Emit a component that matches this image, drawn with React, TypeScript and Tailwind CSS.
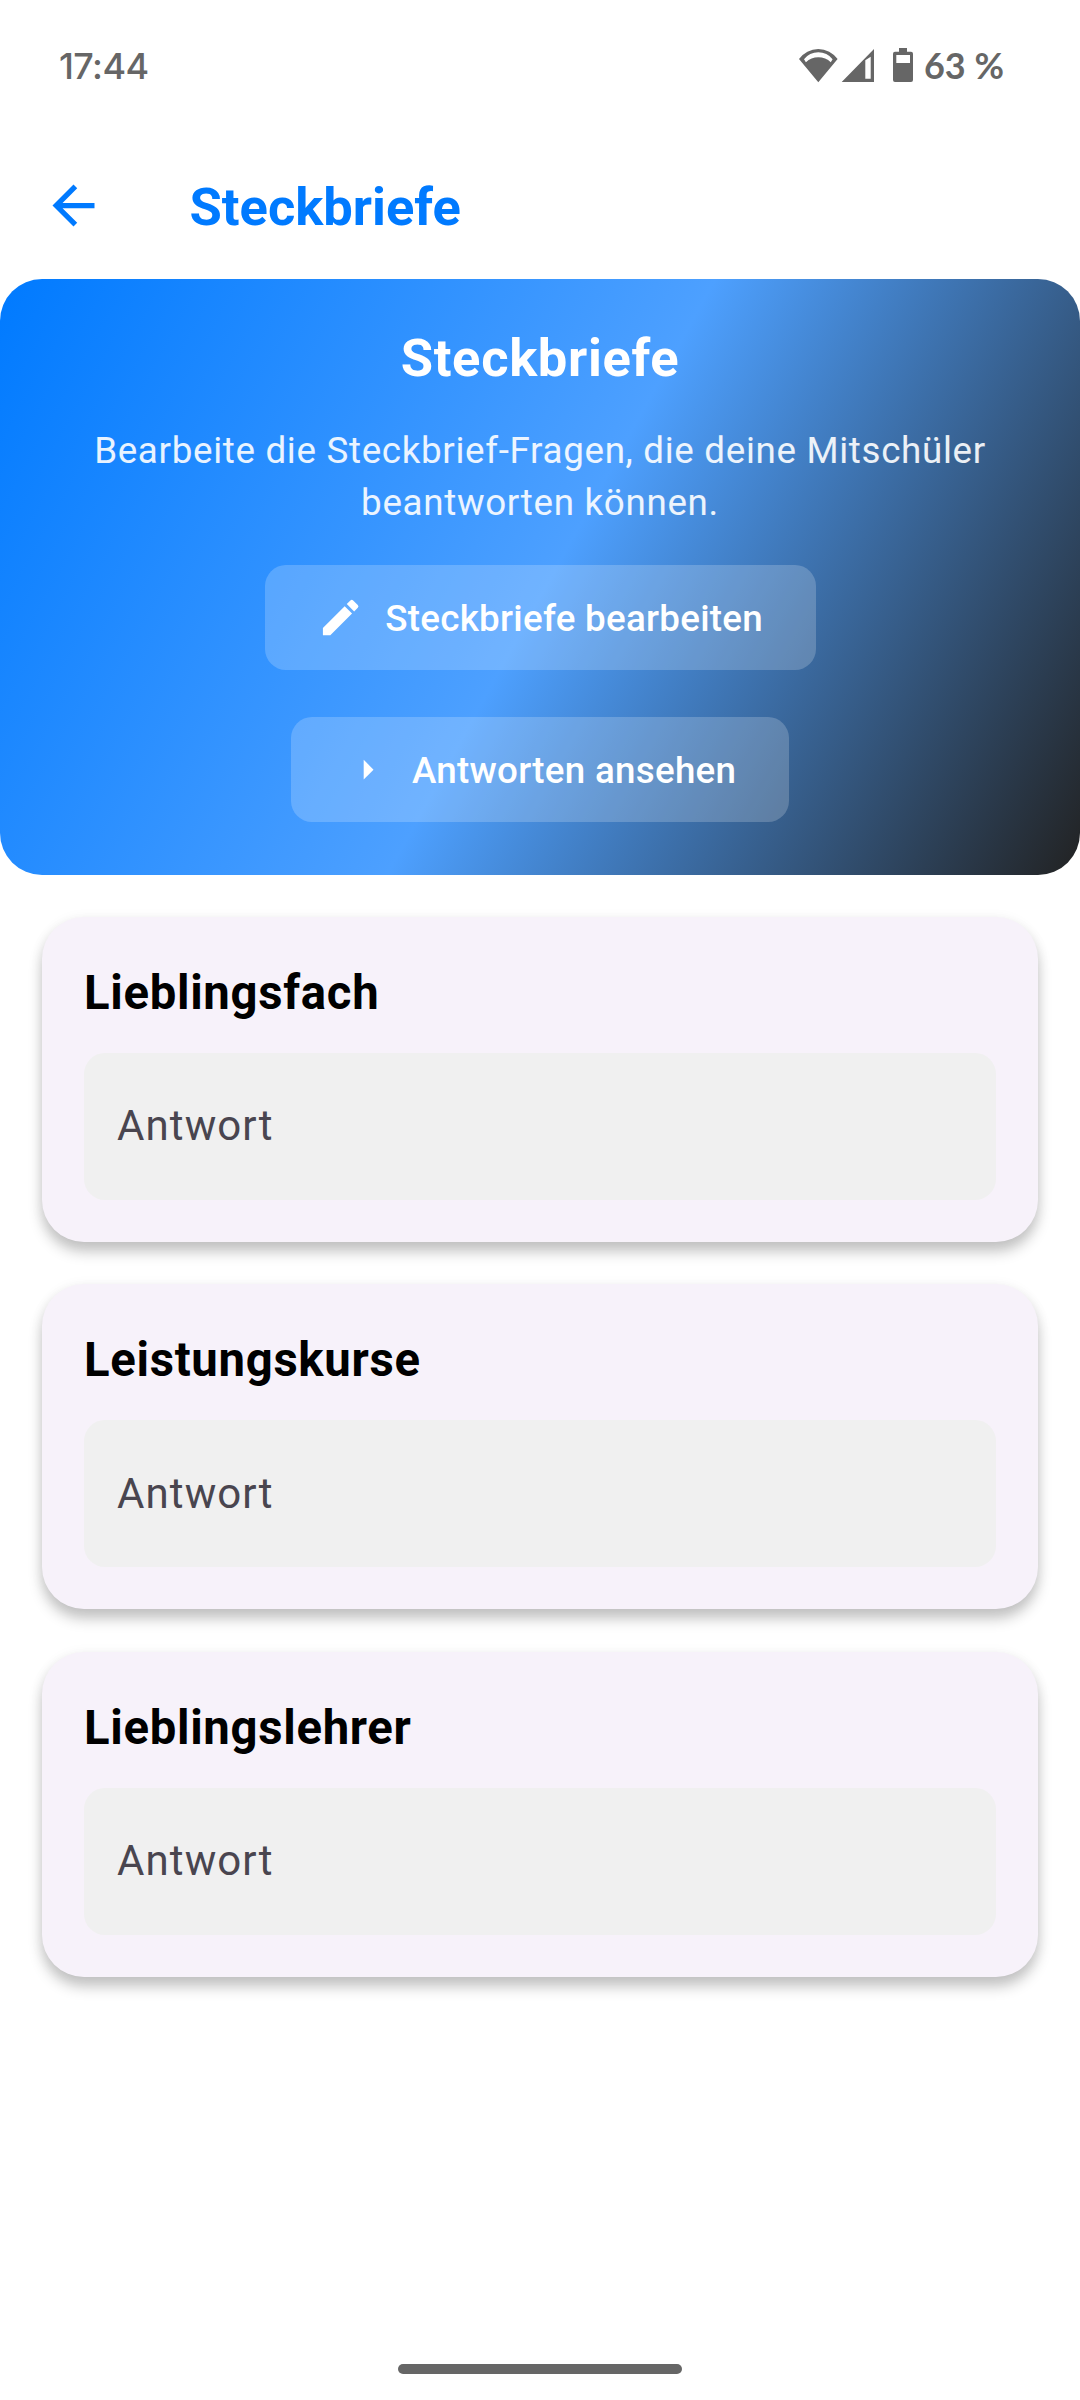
import React from "react";

const questions = ["Lieblingsfach", "Leistungskurse", "Lieblingslehrer"];

function StatusBar() {
  return (
    <div className="flex h-[132px] items-center justify-between pl-[59px] pr-[76px] text-[36px] leading-none text-[#666666]">
      <span className="font-['Inter',sans-serif] font-medium tracking-[-0.6px]">
        17:44
      </span>
      <div className="flex items-center">
        <svg className="h-9 w-10" viewBox="0 0 40 36" fill="currentColor">
          <path
            fillRule="evenodd"
            d="M1 11A23.6 23.6 0 0 1 39.6 11L20.3 34.3ZM6 11.3L7.9 14.3A17.8 17.8 0 0 1 32.8 14.3L34.6 11.3A18 18 0 0 0 6 11.3Z"
          />
        </svg>
        <svg className="ml-[3px] h-9 w-[33px]" viewBox="0 0 33 36" fill="currentColor">
          <path
            fillRule="evenodd"
            d="M.7 34L33 1V34ZM24.3 12.3V30.7H29.7V8.7Z"
          />
        </svg>
        <svg className="ml-[19px] h-9 w-5" viewBox="0 0 20 36" fill="currentColor">
          <path
            fillRule="evenodd"
            d="M6 0H14V3.7H18A2 2 0 0 1 20 5.7V32A2 2 0 0 1 18 34H2A2 2 0 0 1 0 32V5.7A2 2 0 0 1 2 3.7H6ZM3.3 7V15H17V7Z"
          />
        </svg>
        <span className="ml-[11px] pb-[3px] font-['Lato',sans-serif] font-bold">
          63 %
        </span>
      </div>
    </div>
  );
}

function Header() {
  return (
    <header className="flex h-[147px] items-center pl-[42px] text-[#007aff]">
      <svg className="h-[63px] w-[63px]" viewBox="0 0 24 24" fill="currentColor">
        <path d="M20 11H7.83l5.59-5.59L12 4l-8 8 8 8 1.41-1.41L7.83 13H20v-2z" />
      </svg>
      <h1 className="ml-[84.5px] pt-[3px] text-[52.5px] leading-none font-bold">
        Steckbriefe
      </h1>
    </header>
  );
}

function HeroButton({ icon, label }: { icon: string; label: string }) {
  return (
    <button className="flex h-[105px] items-center gap-[21px] rounded-[21px] bg-white/20 px-[52.5px] text-[36.75px] leading-none font-medium tracking-[0.27px]">
      <svg className="h-[47.25px] w-[47.25px]" viewBox="0 0 24 24" fill="currentColor">
        <path d={icon} />
      </svg>
      <span className="pt-[3px]">{label}</span>
    </button>
  );
}

function Hero() {
  return (
    <section className="flex h-[595.7px] flex-col items-center rounded-[42px] bg-[linear-gradient(118.85deg,#007aff_0%,#4da0ff_50.8%,#222222_100%)] pt-[52.5px] text-white">
      <h2 className="text-[52.5px] leading-none font-bold tracking-[0.65px]">
        Steckbriefe
      </h2>
      <p className="mt-[41px] w-[960px] text-center text-[36.75px] leading-[52px] tracking-[0.68px] text-white/90">
        Bearbeite die Steckbrief-Fragen, die deine Mitschüler beantworten
        können.
      </p>
      <div className="mt-[36px] flex flex-col items-center gap-[47px]">
        <HeroButton
          icon="M3 17.25V21h3.75L17.81 9.94l-3.75-3.75L3 17.25zM20.71 7.04a.996.996 0 0 0 0-1.41l-2.34-2.34a.996.996 0 0 0-1.41 0l-1.83 1.83 3.75 3.75 1.83-1.83z"
          label="Steckbriefe bearbeiten"
        />
        <HeroButton icon="M10 17l5-5-5-5v10z" label="Antworten ansehen" />
      </div>
    </section>
  );
}

function QuestionCard({ title }: { title: string }) {
  return (
    <div className="rounded-[42px] bg-[#f7f2fa] p-[42px] shadow-[0_10px_14px_rgba(0,0,0,0.22),0_2px_14px_rgba(0,0,0,0.06)]">
      <h3 className="text-[47.25px] leading-[69px] font-bold tracking-[0.7px] text-black">
        {title}
      </h3>
      <div className="mt-[25px] flex h-[147px] items-center rounded-[21px] bg-[#f0f0f0] px-[33px] pb-[1px] text-[42px] tracking-[1.1px] text-[#49454f]">
        Antwort
      </div>
    </div>
  );
}

export default function App() {
  return (
    <div className="flex h-[2400px] w-[1080px] flex-col bg-white font-['Roboto',sans-serif]">
      <StatusBar />
      <Header />
      <Hero />
      <main className="flex flex-1 flex-col gap-[42.5px] px-[42px] pt-[42.3px]">
        {questions.map((title) => (
          <QuestionCard key={title} title={title} />
        ))}
      </main>
      <div className="mx-auto mb-[26px] h-[10px] w-[284px] rounded-full bg-[#666666]" />
    </div>
  );
}
